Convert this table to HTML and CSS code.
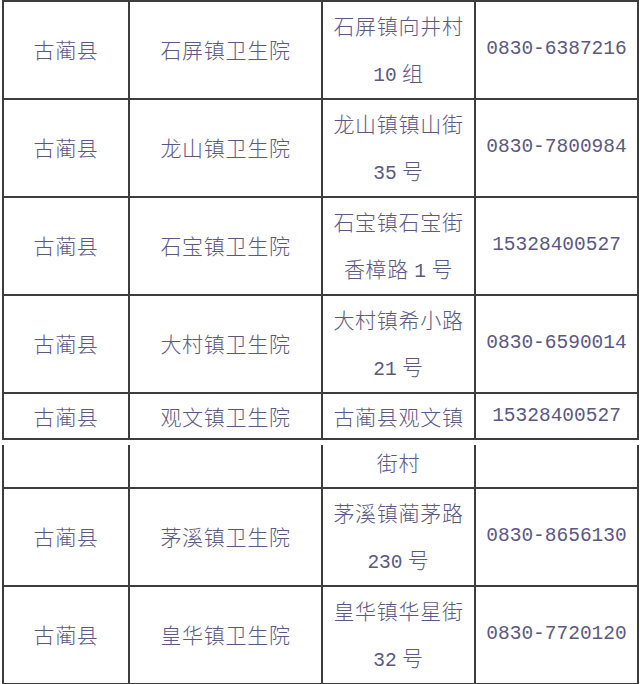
FILE: index.html
```html
<!DOCTYPE html>
<html lang="zh-CN">
<head>
<meta charset="utf-8">
<title>古蔺县卫生院</title>
<link rel="stylesheet" href="styles.css">
</head>
<body>
<table class="grid">
  <colgroup><col class="c1"><col class="c2"><col class="c3"><col class="c4"></colgroup>
  <tr class="tall">
    <td>古蔺县</td><td>石屏镇卫生院</td><td>石屏镇向井村<br><span class="num">10</span> 组</td><td class="num">0830-6387216</td>
  </tr>
  <tr class="tall">
    <td>古蔺县</td><td>龙山镇卫生院</td><td>龙山镇镇山街<br><span class="num">35</span> 号</td><td class="num">0830-7800984</td>
  </tr>
  <tr class="tall">
    <td>古蔺县</td><td>石宝镇卫生院</td><td>石宝镇石宝街<br>香樟路 <span class="num">1</span> 号</td><td class="num">15328400527</td>
  </tr>
  <tr class="tall">
    <td>古蔺县</td><td>大村镇卫生院</td><td>大村镇希小路<br><span class="num">21</span> 号</td><td class="num">0830-6590014</td>
  </tr>
  <tr class="cut">
    <td>古蔺县</td><td>观文镇卫生院</td><td>古蔺县观文镇</td><td class="num">15328400527</td>
  </tr>
</table>
<table class="grid second">
  <colgroup><col class="c1"><col class="c2"><col class="c3"><col class="c4"></colgroup>
  <tr class="cont">
    <td></td><td></td><td>街村</td><td></td>
  </tr>
  <tr class="tall">
    <td>古蔺县</td><td>茅溪镇卫生院</td><td>茅溪镇蔺茅路<br><span class="num">230</span> 号</td><td class="num">0830-8656130</td>
  </tr>
  <tr class="tall">
    <td>古蔺县</td><td>皇华镇卫生院</td><td>皇华镇华星街<br><span class="num">32</span> 号</td><td class="num">0830-7720120</td>
  </tr>
</table>
</body>
</html>
```
FILE: styles.css
```css
html, body {
  margin: 0;
  padding: 0;
  background: #ffffff;
}

.grid {
  border-collapse: collapse;
  table-layout: fixed;
  width: 635px;
  margin-left: 2px;
  font-family: "Noto Sans CJK SC", "Noto Sans", sans-serif;
  font-weight: 300;
  font-size: 21px;
  letter-spacing: 0.7px;
  color: #5b5884;
}

.c1 { width: 126px; }
.c2 { width: 193px; }
.c3 { width: 153px; }
.c4 { width: 163px; }

.grid td {
  border: 2px solid #3d3d3d;
  padding: 0;
  text-align: center;
  vertical-align: middle;
  line-height: 48px;
  white-space: nowrap;
  overflow: hidden;
}

.tall td {
  height: 94px;
  line-height: 47px;
  padding-bottom: 2px;
}

.cut td {
  height: 44px;
  line-height: 44px;
}

.second {
  margin-top: 5px;
}

.cont td {
  border-top: none;
  height: 42px;
  line-height: 34px;
  vertical-align: top;
}

.num {
  font-family: "Liberation Mono", monospace;
  font-weight: 400;
  font-size: 19.5px;
  letter-spacing: 0;
}

span.num {
  line-height: 1;
}
```
